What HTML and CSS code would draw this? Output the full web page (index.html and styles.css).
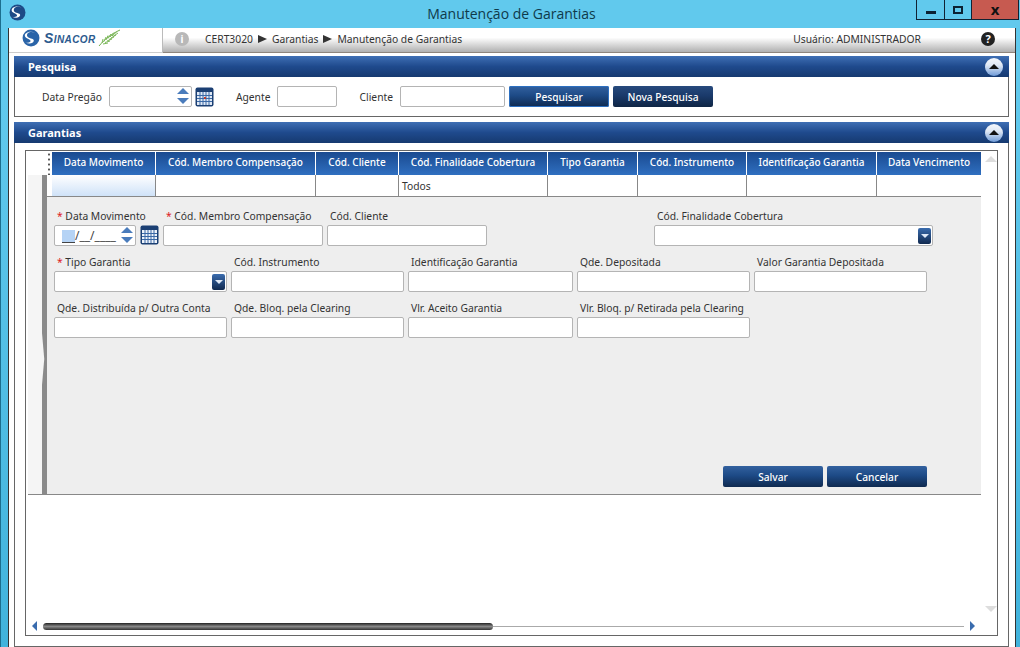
FILE: index.html
```html
<!DOCTYPE html>
<html lang="pt-BR">
<head>
    <meta charset="UTF-8">
    <title>Manutenção de Garantias</title>
    <link rel="stylesheet" href="styles.css">
</head>
<body>
    <!-- window title bar -->
    <header class="titlebar">
        <svg class="app-icon" width="17" height="17" viewBox="0 0 16 16">
            <circle cx="8" cy="8" r="7.500" fill="#1d4a86"/>
            <path d="M12 3.500C8 1.500 4 3 4.500 6S11 8 10.500 10.500 6.500 13.500 3 12C6 12.500 8 11.800 7.500 10.300S2.500 8.500 2.500 5.800 7.500 1 12 3.500Z" fill="#fff"/>
        </svg>
        <span class="window-title">Manutenção de Garantias</span>
        <div class="window-buttons">
            <span class="win-btn"><i class="min-glyph"></i></span>
            <span class="win-btn"><i class="max-glyph"></i></span>
            <span class="win-btn close"><b>x</b></span>
        </div>
    </header>

    <main class="client">
        <!-- breadcrumb bar -->
        <div class="topbar">
            <div class="logo-cell">
                <svg width="18" height="18" viewBox="0 0 16 16">
                    <circle cx="8" cy="8" r="7.500" fill="#2a64a8"/>
                    <path d="M12 3.500C8 1.500 4 3 4.500 6S11 8 10.500 10.500 6.500 13.500 3 12C6 12.500 8 11.800 7.500 10.300S2.500 8.500 2.500 5.800 7.500 1 12 3.500Z" fill="#fff"/>
                </svg>
                <span class="logo-text">Sinacor</span>
                <svg class="leaf" width="23" height="18" viewBox="0 0 23 18">
                    <path d="M1 17C6 11 13 5 22 1" stroke="#6fae4e" stroke-width="1" fill="none"/>
                    <path d="M4 14L5 10M6 12.500L8 8M8 11L10 6.500M10 9.500L13 5M12 8L16 3.500M14 7L19 2.500M5 15L10 14M7 13.500L12 12M9 12L14 10M11 10.500L16 8M13 9L18 6M15 7.500L20 4" stroke="#7cb85a" stroke-width="1" fill="none"/>
                </svg>
            </div>
            <div class="crumbs">
                <span class="info-icon">i</span>
                <span>CERT3020</span><i class="arrow"></i>
                <span>Garantias</span><i class="arrow"></i>
                <span>Manutenção de Garantias</span>
            </div>
            <span class="user">Usuário: ADMINISTRADOR</span>
            <span class="help-icon">?</span>
        </div>

        <!-- search panel -->
        <section class="panel search-panel">
            <h2 class="panel-head">Pesquisa <span class="collapse"></span></h2>
            <div class="search-row">
                <label class="lbl-date">Data Pregão</label>
                <div class="input date-input search-date">
                    <span class="spin"><i class="up"></i><i class="down"></i></span>
                </div>
                <svg class="cal" width="19" height="20" viewBox="0 0 19 20">
                    <rect x=".5" y=".5" width="18" height="19" rx="2" fill="#1b3f73"/>
                    <rect x="2" y="5" width="15" height="13" fill="#dfe8f4"/>
                    <path d="M2 8.500H17M2 11.500H17M2 14.500H17M5 5V18M8 5V18M11 5V18M14 5V18" stroke="#3a69a6"/>
                    <rect x="9" y="10" width="2" height="2" fill="#c0392b"/>
                </svg>
                <label class="lbl-agente">Agente</label>
                <input class="input agente-input">
                <label class="lbl-cliente">Cliente</label>
                <input class="input cliente-input">
                <button class="btn btn-focus">Pesquisar</button>
                <button class="btn btn-dark">Nova Pesquisa</button>
            </div>
        </section>

        <!-- main panel -->
        <section class="panel main-panel">
            <h2 class="panel-head">Garantias <span class="collapse"></span></h2>
            <div class="frame">
                <div class="frame-body">
                    <div class="grid-area">
                        <div class="grid-head">
                            <span class="handle"></span>
                            <span class="th c1">Data Movimento</span>
                            <span class="th c2">Cód. Membro Compensação</span>
                            <span class="th c3">Cód. Cliente</span>
                            <span class="th c4">Cód. Finalidade Cobertura</span>
                            <span class="th c5">Tipo Garantia</span>
                            <span class="th c6">Cód. Instrumento</span>
                            <span class="th c7">Identificação Garantia</span>
                            <span class="th c8">Data Vencimento</span>
                        </div>
                        <div class="grid-rest">
                            <div class="gutter"></div>
                            <div class="splitter"><i></i></div>
                            <div class="grid-main">
                                <div class="grid-row">
                                    <span class="td c1 selected"></span>
                                    <span class="td c2"></span>
                                    <span class="td c3"></span>
                                    <span class="td c4">Todos</span>
                                    <span class="td c5"></span>
                                    <span class="td c6"></span>
                                    <span class="td c7"></span>
                                    <span class="td c8"></span>
                                </div>
                                <form class="detail">
                                    <div class="form-row">
                                        <div class="field f-date">
                                            <label><em>*</em> Data Movimento</label>
                                            <div class="date-line">
                                                <div class="input date-input">
                                                    <span class="mask"><i></i>/__/____</span>
                                                    <span class="spin"><i class="up"></i><i class="down"></i></span>
                                                </div>
                                                <svg class="cal" width="19" height="20" viewBox="0 0 19 20">
                                                    <rect x=".5" y=".5" width="18" height="19" rx="2" fill="#1b3f73"/>
                                                    <rect x="2" y="5" width="15" height="13" fill="#eef3fa"/>
                                                    <path d="M2 8.500H17M2 11.500H17M2 14.500H17M5 5V18M8 5V18M11 5V18M14 5V18" stroke="#3a69a6"/>
                                                </svg>
                                            </div>
                                        </div>
                                        <div class="field w160"><label><em>*</em> Cód. Membro Compensação</label><input class="input"></div>
                                        <div class="field w160"><label>Cód. Cliente</label><input class="input"></div>
                                        <div class="field f-final">
                                            <label>Cód. Finalidade Cobertura</label>
                                            <div class="input select"><span class="drop"></span></div>
                                        </div>
                                    </div>
                                    <div class="form-row">
                                        <div class="field w173">
                                            <label><em>*</em> Tipo Garantia</label>
                                            <div class="input select"><span class="drop"></span></div>
                                        </div>
                                        <div class="field w173"><label>Cód. Instrumento</label><input class="input"></div>
                                        <div class="field w165"><label>Identificação Garantia</label><input class="input"></div>
                                        <div class="field w173"><label>Qde. Depositada</label><input class="input"></div>
                                        <div class="field w173"><label>Valor Garantia Depositada</label><input class="input"></div>
                                    </div>
                                    <div class="form-row">
                                        <div class="field w173"><label>Qde. Distribuída p/ Outra Conta</label><input class="input"></div>
                                        <div class="field w173"><label>Qde. Bloq. pela Clearing</label><input class="input"></div>
                                        <div class="field w165"><label>Vlr. Aceito Garantia</label><input class="input"></div>
                                        <div class="field w173"><label>Vlr. Bloq. p/ Retirada pela Clearing</label><input class="input"></div>
                                    </div>
                                    <div class="form-actions">
                                        <button type="button" class="btn">Salvar</button>
                                        <button type="button" class="btn">Cancelar</button>
                                    </div>
                                </form>
                            </div>
                        </div>
                    </div>
                    <div class="vscroll">
                        <i class="v-up"></i>
                        <i class="v-down"></i>
                    </div>
                </div>
                <div class="hscroll">
                    <i class="h-left"></i>
                    <div class="track"><span class="thumb"></span></div>
                    <i class="h-right"></i>
                </div>
            </div>
        </section>
    </main>
</body>
</html>
```
FILE: styles.css
```css
/* General styling */
html, body {
    margin: 0;
    padding: 0;
    height: 647px;
    overflow: hidden;
}

body {
    background: linear-gradient(#61c9ed, #61c9ed 100px, #41b3dc);
    font-family: "Noto Sans", "Open Sans", sans-serif;
    font-size: 10.3px;
    color: #333;
    border-left: 1px solid #1c6e8e;
    box-sizing: border-box;
}

/* Title bar */
.titlebar {
    height: 28px;
    position: relative;
    display: flex;
    align-items: flex-start;
    justify-content: center;
}

.app-icon {
    position: absolute;
    left: 8px;
    top: 4px;
}

.window-title {
    margin: 4px 0 0 2px;
    font-family: "Open Sans", sans-serif;
    font-size: 14px;
    color: #0f3a4a;
}

.window-buttons {
    position: absolute;
    right: 1px;
    top: 0;
    display: flex;
    height: 19px;
    border: 1px solid #123;
    border-top: 0;
}

.win-btn {
    width: 26px;
    display: flex;
    align-items: center;
    justify-content: center;
    border-left: 1px solid #123;
}

.win-btn:first-child {
    border-left: 0;
    width: 27px;
}

.win-btn.close {
    width: 46px;
    background: #c75a50;
    color: #111;
    font-size: 15px;
    line-height: 15px;
}

.min-glyph {
    width: 10px;
    height: 3px;
    margin-top: 5px;
    background: #0c2233;
}

.max-glyph {
    width: 6px;
    height: 4px;
    border: 2px solid #0c2233;
}

/* Client area */
.client {
    margin-left: 7px;
    width: 1008px;
    height: 619px;
    box-sizing: border-box;
    background: #fff;
    border-left: 1px solid #333;
    border-right: 1px solid #333;
}

.topbar {
    height: 25px;
    display: flex;
    align-items: center;
    padding-bottom: 2px;
    box-sizing: border-box;
    background: linear-gradient(#fff 0, #fff 40%, #b0b0b0 100%);
    border-bottom: 1px solid #8e857c;
}

.logo-cell {
    width: 154px;
    height: 25px;
    flex: none;
    margin-bottom: -2px;
    box-sizing: border-box;
    padding: 0 0 3px 13px;
    display: flex;
    align-items: center;
    gap: 4px;
    background: #fff;
    border-right: 1px solid #bbb;
    border-bottom: 1px solid #ccc;
}

.logo-text {
    font-family: "Liberation Sans", sans-serif;
    font-style: italic;
    font-weight: bold;
    font-size: 14px;
    letter-spacing: .4px;
    font-variant: small-caps;
    color: #2c5a8e;
}

.leaf {
    margin-left: -2px;
}

.crumbs {
    display: flex;
    align-items: center;
    margin-left: 12px;
    gap: 4px;
    flex: 1;
}

.crumbs .arrow {
    width: 0;
    height: 0;
    margin: 0 1px;
    border-left: 9px solid #333;
    border-top: 4px solid transparent;
    border-bottom: 4px solid transparent;
}

.info-icon {
    width: 14px;
    height: 14px;
    margin-right: 12px;
    border-radius: 50%;
    background: #b8b8b8;
    color: #fff;
    font-weight: bold;
    font-size: 10px;
    line-height: 14px;
    text-align: center;
}

.user {
    margin-right: 60px;
}

.help-icon {
    width: 14px;
    height: 14px;
    margin-right: 20px;
    border-radius: 50%;
    background: #222;
    color: #fff;
    font-weight: bold;
    font-size: 11px;
    line-height: 14px;
    text-align: center;
}

/* Panels */
.panel {
    margin: 0 6px 0 5px;
    border: 1px solid #666;
    border-top: 0;
    box-sizing: border-box;
}

.search-panel {
    margin-top: 3px;
    height: 61px;
}

.main-panel {
    margin-top: 5px;
    height: 525px;
}

.panel-head {
    margin: 0 -1px;
    height: 21px;
    box-sizing: border-box;
    padding: 0 6px 0 14px;
    display: flex;
    align-items: center;
    justify-content: space-between;
    background: linear-gradient(#3f6fb4, #1f4a8d 50%, #163a70);
    color: #fff;
    font-size: 11px;
    font-weight: bold;
}

.collapse {
    width: 18px;
    height: 18px;
    border-radius: 50%;
    background: linear-gradient(#f4f7fb, #dfe8f5 40%, #6f9bd8);
    position: relative;
}

.collapse::after {
    content: "";
    position: absolute;
    left: 4px;
    top: 6px;
    border: 5px solid transparent;
    border-top: 0;
    border-bottom: 5px solid #111;
}

.search-row {
    display: flex;
    align-items: center;
    height: 39px;
    padding-left: 27px;
    white-space: nowrap;
}

.search-row > * { flex: none; }

.lbl-date { margin-right: 7px; }
.lbl-agente { margin: 0 6px 0 22px; }
.lbl-cliente { margin: 0 7px 0 23px; }
.search-row .cal { margin-left: 3px; }
.search-row .search-date { width: 83px; }
.search-row .agente-input { width: 60px; }
.search-row .cliente-input { width: 105px; margin-right: 4px; }
.search-row .btn { margin-right: 4px; }

/* Inputs and buttons */
.input {
    width: 100%;
    height: 21px;
    box-sizing: border-box;
    border: 1px solid #b4b4b4;
    border-radius: 2px;
    background: #fff;
    padding: 0;
    display: block;
}

.btn {
    width: 100px;
    height: 21px;
    padding: 0;
    border: 0;
    border-radius: 2px;
    background: linear-gradient(#33619f, #1d4a86 45%, #0f2a50);
    color: #fff;
    font-family: inherit;
    font-size: 10.2px;
    font-weight: 500;
}

.btn-dark {
    background: linear-gradient(#274a7d, #1a3a6b 45%, #0f2544);
}

.btn-focus {
    box-shadow: inset 0 0 0 1px #2c6fc0;
}

.date-input {
    position: relative;
    display: flex;
    align-items: center;
}

.mask {
    margin-left: 7px;
    display: flex;
    align-items: center;
    font-size: 12px;
    color: #444;
}

.mask i {
    width: 13px;
    height: 12px;
    margin-top: 1px;
    background: #b5d3f5;
    border-bottom: 1px solid #444;
}

.spin {
    position: absolute;
    right: 2px;
    top: 1px;
    display: flex;
    flex-direction: column;
    gap: 4px;
}

.spin i {
    border: 6px solid transparent;
    border-top: 0;
    border-bottom: 6px solid #4a7cbc;
    display: block;
}

.spin .down {
    transform: rotate(180deg);
}

/* Inner frame */
.frame {
    margin: 7px 10px 0;
    height: 486px;
    box-sizing: border-box;
    border: 1px solid #666;
    display: flex;
    flex-direction: column;
    background: #fff;
}

.frame-body {
    display: flex;
    height: 469px;
}

.grid-area {
    width: 953px;
    margin-left: 2px;
    margin-top: 1px;
}

.grid-head {
    display: flex;
    height: 23px;
}

.handle {
    width: 24px;
    background: radial-gradient(circle, #555 1px, transparent 1.200px) 19px 0 / 4px 5px repeat-y;
}

.c1 { width: 103px; }
.c2 { width: 159px; }
.c3 { width: 82px; }
.c4 { width: 148px; }
.c5 { width: 89px; }
.c6 { width: 108px; }
.c7 { width: 129px; }
.c8 { width: 104px; }

.th {
    margin-right: 1px;
    background: linear-gradient(#1a4a90, #2f6fc0);
    color: #fff;
    font-size: 10px;
    line-height: 21px;
    text-align: center;
    font-weight: 500;
}

.th.c8 { margin-right: 0; }

.grid-rest {
    display: flex;
    height: 320px;
    box-sizing: border-box;
    border-bottom: 1px solid #888;
}

.gutter {
    width: 14px;
    background: #f5f5f5;
}

.splitter {
    width: 5px;
    background: #8a8a8a;
    position: relative;
}

/* the narrow waist of the splitter bar */
.splitter i {
    position: absolute;
    left: 0;
    top: 158px;
    width: 5px;
    height: 52px;
    background: #f5f5f5;
    clip-path: polygon(0 0, 45% 50%, 0 100%);
}

.splitter i::after {
    content: "";
    position: absolute;
    inset: 0;
    background: #eee;
    clip-path: polygon(100% 0, 70% 50%, 100% 100%);
}

.grid-main {
    flex: 1;
    min-width: 0;
}

.grid-row {
    display: flex;
    height: 22px;
    box-sizing: border-box;
    padding-left: 5px;
    border-bottom: 1px solid #888;
    background: #fff;
}

.td {
    height: 21px;
    border-right: 1px solid #888;
    line-height: 23px;
    text-indent: 3px;
}

.td.c8 { border-right: 0; }

.td.selected {
    background: linear-gradient(#fff, #cfe2f8);
}

/* Detail form */
.detail {
    height: 297px;
    box-sizing: border-box;
    background: #eee;
    padding: 12px 0 0 7px;
    display: flex;
    flex-direction: column;
}

.form-row {
    display: flex;
    gap: 4px;
    height: 46px;
}

.field label {
    display: block;
    height: 16px;
    line-height: 14px;
    padding-left: 3px;
    white-space: nowrap;
}

.field em {
    color: #d22;
    font-style: normal;
}

.w160 { width: 160px; }
.w165 { width: 165px; }
.w173 { width: 173px; }
.f-date { width: 105px; }
.f-final { width: 279px; margin-left: 163px; }

.date-line {
    display: flex;
    gap: 4px;
}

.date-line .date-input { width: 82px; }

.select {
    position: relative;
}

.drop {
    position: absolute;
    right: 1px;
    top: 2px;
    width: 13px;
    height: 16px;
    border-radius: 2px;
    background: linear-gradient(#3a6cae, #10294f);
}

.drop::after {
    content: "";
    position: absolute;
    left: 3px;
    top: 6px;
    border: 4px solid transparent;
    border-bottom: 0;
    border-top: 4px solid #dfe9f7;
}

.form-actions {
    margin-top: auto;
    margin-bottom: 7px;
    padding-right: 54px;
    display: flex;
    justify-content: flex-end;
    gap: 4px;
}

/* Scrollbars */
.vscroll {
    flex: 1;
    display: flex;
    flex-direction: column;
    justify-content: space-between;
    align-items: center;
    padding: 5px 0 8px 3px;
}

.vscroll i {
    border: 6px solid transparent;
}

.vscroll .v-up {
    border-top: 0;
    border-bottom: 6px solid #ddd;
}

.vscroll .v-down {
    border-bottom: 0;
    border-top: 6px solid #ddd;
}

.hscroll {
    display: flex;
    align-items: center;
    height: 12px;
    padding-left: 6px;
    gap: 6px;
    width: 943px;
}

.h-left {
    border: 5px solid transparent;
    border-left: 0;
    border-right: 5px solid #3a6cae;
}

.h-right {
    border: 5px solid transparent;
    border-right: 0;
    border-left: 5px solid #3a6cae;
}

.track {
    flex: 1;
    height: 1px;
    background: #aaa;
    display: flex;
    align-items: center;
}

.thumb {
    width: 450px;
    height: 7px;
    border-radius: 4px;
    background: linear-gradient(#222, #888 50%, #333);
}
```
